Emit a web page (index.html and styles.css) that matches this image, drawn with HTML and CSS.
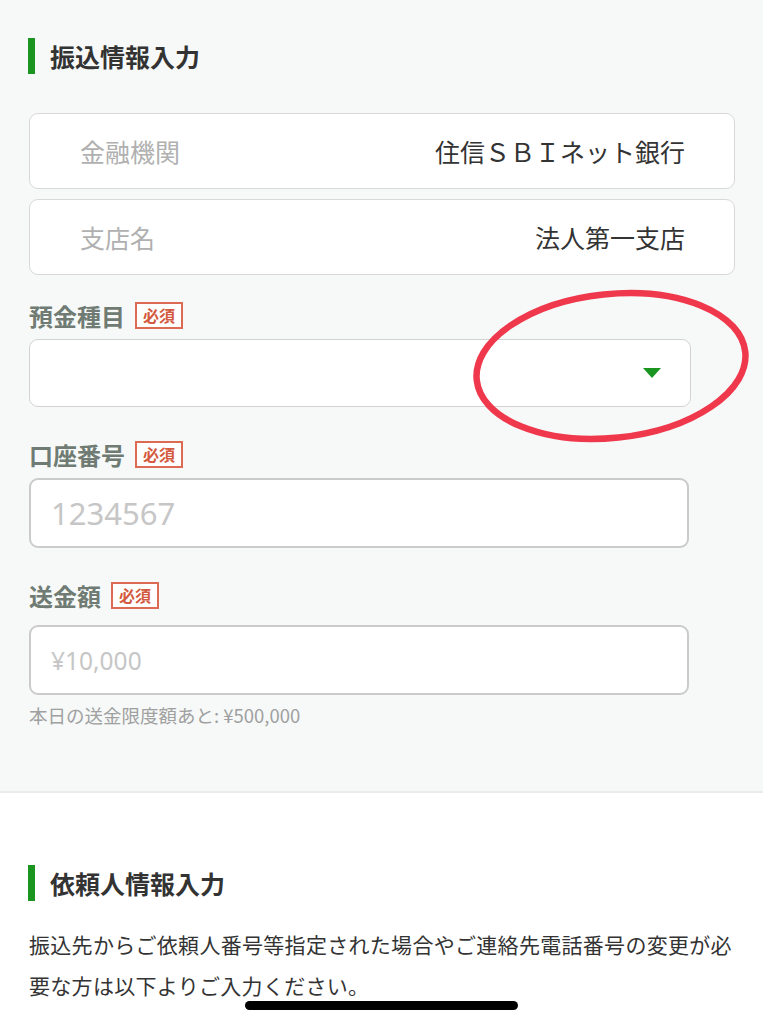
FILE: index.html
```html
<!DOCTYPE html>
<html lang="ja">
<head>
  <meta charset="UTF-8">
  <meta name="viewport" content="width=device-width, initial-scale=1.0">
  <title>振込情報入力</title>
  <link rel="stylesheet" href="styles.css">
</head>
<body>
  <section class="transfer">
    <h2 class="section-title">振込情報入力</h2>

    <div class="info-card">
      <span class="info-label">金融機関</span>
      <span class="info-value">住信ＳＢＩネット銀行</span>
    </div>
    <div class="info-card">
      <span class="info-label">支店名</span>
      <span class="info-value">法人第一支店</span>
    </div>

    <div class="field field-type">
      <div class="field-label">預金種目 <span class="badge">必須</span></div>
      <div class="select-box">
        <span class="select-arrow"></span>
      </div>
    </div>

    <div class="field field-account">
      <div class="field-label">口座番号 <span class="badge">必須</span></div>
      <div class="text-box"><span class="placeholder placeholder-large">1234567</span></div>
    </div>

    <div class="field field-amount">
      <div class="field-label">送金額 <span class="badge">必須</span></div>
      <div class="text-box"><span class="placeholder">¥10,000</span></div>
      <p class="hint">本日の送金限度額あと: ¥500,000</p>
    </div>
  </section>

  <section class="requester">
    <h2 class="section-title">依頼人情報入力</h2>
    <p class="note">振込先からご依頼人番号等指定された場合やご連絡先電話番号の変更が必要な方は以下よりご入力ください。</p>
  </section>

  <svg class="mark" width="282" height="160" viewBox="0 0 282 160">
    <ellipse cx="140" cy="79" rx="135" ry="72" fill="none" stroke="#f0384c" stroke-width="6.5" transform="rotate(-6 140 79)"/>
  </svg>

  <div class="home-bar"></div>
</body>
</html>
```

FILE: styles.css
```css
body {
  margin: 0;
  font-family: "Noto Sans CJK JP", "Noto Sans", sans-serif;
  color: #333;
  background-color: #fff;
}

.transfer {
  background-color: #f6f9f8;
  padding: 38px 28px 0 29px;
  height: 753px;
  border-bottom: 2px solid #e9ecea;
}

.section-title {
  margin: 0 0 0 -1px;
  height: 36px;
  display: flex;
  align-items: center;
  border-left: 7px solid #1a9620;
  padding-left: 15px;
  font-size: 25px;
  font-weight: bold;
  color: #333;
}

.info-card {
  display: flex;
  justify-content: space-between;
  align-items: center;
  height: 74px;
  margin-top: 39px;
  padding: 0 49px 0 50px;
  background-color: #fff;
  border: 1px solid #d8d8d8;
  border-radius: 9px;
  font-size: 25px;
}

.info-card + .info-card {
  margin-top: 10px;
}

.info-label {
  color: #b0b0b0;
}

.info-value {
  color: #333;
}

.field {
  margin-top: 32px;
}

.field-type {
  margin-top: 25px;
}

.field-label {
  display: flex;
  align-items: center;
  height: 30px;
  margin-bottom: 9px;
  font-size: 24px;
  font-weight: bold;
  color: #6f7b73;
}

.field-amount .field-label {
  margin-bottom: 15px;
}

.badge {
  display: inline-block;
  margin-left: 10px;
  padding: 0 6px;
  height: 23px;
  line-height: 23px;
  border: 2px solid #dd6a52;
  font-size: 16px;
  font-weight: bold;
  color: #d35a40;
  background-color: #fff;
}

.select-box,
.text-box {
  display: flex;
  align-items: center;
  height: 66px;
  background-color: #fff;
  border: 1.5px solid #d2d2d2;
  border-radius: 9px;
  box-sizing: content-box;
}

.select-box {
  width: 660px;
  justify-content: flex-end;
}

.select-arrow {
  width: 0;
  height: 0;
  margin-right: 29px;
  border-left: 9px solid transparent;
  border-right: 9px solid transparent;
  border-top: 10px solid #1a9620;
}

.text-box {
  width: 656px;
  border-color: #cbcbcb;
  border-width: 2px;
}

.placeholder {
  margin-left: 20px;
  font-family: "Noto Sans", sans-serif;
  font-size: 24.5px;
  color: #c6c6c6;
}

.placeholder-large {
  font-size: 31px;
}

.hint {
  margin: 10px 0 0;
  font-size: 18.5px;
  line-height: 20px;
  color: #a0a0a0;
}

.requester {
  padding: 72px 28px 0 29px;
}

.note {
  margin: 23px 0 0;
  font-size: 21px;
  letter-spacing: 0.3px;
  line-height: 41px;
  color: #333;
}

.mark {
  position: absolute;
  left: 471px;
  top: 287px;
}

.home-bar {
  position: fixed;
  left: 245px;
  top: 1001px;
  width: 273px;
  height: 9px;
  border-radius: 5px;
  background-color: #000;
}
```
